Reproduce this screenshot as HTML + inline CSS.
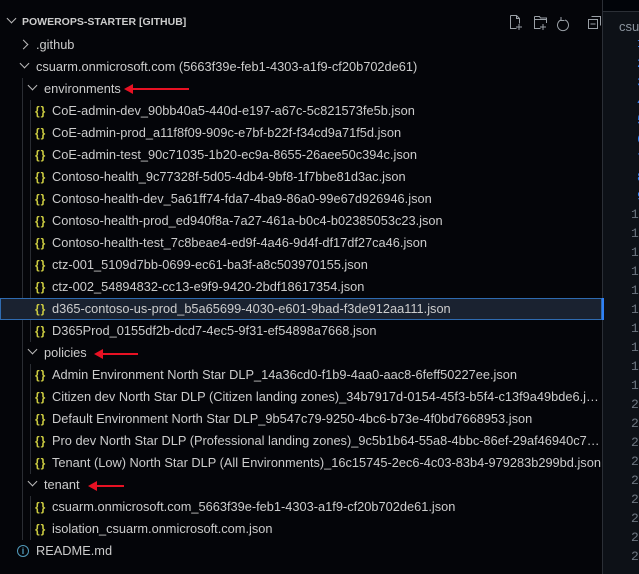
<!DOCTYPE html>
<html><head><meta charset="utf-8"><style>
*{margin:0;padding:0;box-sizing:border-box}
body{width:639px;height:574px;overflow:hidden;background:#040509;font-family:"Segoe UI","Liberation Sans",sans-serif;color:#cccccc;font-size:12.8px;position:relative}
.row{position:absolute;left:0;width:602px;height:22px;line-height:22px;white-space:nowrap;overflow:hidden}
.t{position:absolute;top:0}
.e{right:2px;overflow:hidden;text-overflow:ellipsis}
.ic{position:absolute;top:0;color:#cbcb41;font-weight:bold;font-size:12px;letter-spacing:1px}
.chev{position:absolute;top:7px;width:7px;height:7px;border-right:1.3px solid #bbb;border-bottom:1.3px solid #bbb}
.down{transform:rotate(45deg);top:4px}
.right{transform:rotate(-45deg)}
.guide{position:absolute;width:1px;background:#2a2d33}
.arrow{position:absolute;height:2px;background:#e81123}
.arrow:before{content:"";position:absolute;left:-8px;top:-4px;border-right:9px solid #e81123;border-top:5px solid transparent;border-bottom:5px solid transparent}
.editor{position:absolute;left:602px;top:0;width:37px;height:574px;background:#0d1117;border-left:1px solid #2b2f36}
.ln{position:absolute;left:28px;font-size:13px;color:#6e7681;font-family:"Liberation Mono",monospace}
</style></head><body>
<div class="row" style="top:11px;font-weight:bold;font-size:10.5px"><span class="chev down" style="left:8px"></span><span class="t" style="left:22px">POWEROPS-STARTER [GITHUB]</span></div>
<svg style="position:absolute;left:508px;top:14px" width="110" height="18" fill="none" stroke="#9aa0a6" stroke-width="1">
<path d="M2.5 1.5h6l3 3v5M2.5 1.5v13h6M8.5 1.5v3h3M11 10v6M8 13h6"/>
<path d="M26.5 2.5h5l1 1.5h6v5M26.5 2.5v12h6M26.5 5.5h12M35 10v6M32 13h6"/>
<path d="M57 5a5.5 5.5 0 1 1-4 0M53 2v3.5h3.5" transform="translate(0,1)"/>
<path d="M80.5 5.5h9v9h-9zM83.5 2.5h9v9M82.5 10h5"/>
</svg>
<div class="guide" style="left:22px;top:78px;height:462px"></div>
<div class="guide" style="left:30px;top:100px;height:242px"></div>
<div class="guide" style="left:30px;top:364px;height:110px"></div>
<div class="guide" style="left:30px;top:496px;height:44px"></div>
<div class="row" style="top:34px"><span class="chev right" style="left:20px"></span><span class="t" style="left:36px">.github</span></div>
<div class="row" style="top:56px"><span class="chev down" style="left:21px"></span><span class="t" style="left:36px">csuarm.onmicrosoft.com (5663f39e-feb1-4303-a1f9-cf20b702de61)</span></div>
<div class="row" style="top:78px"><span class="chev down" style="left:29px"></span><span class="t" style="left:44px">environments</span></div>
<div class="arrow" style="left:132px;top:88px;width:57px"></div>
<div class="row" style="top:100px"><span class="ic" style="left:35px">{}</span><span class="t" style="left:52px">CoE-admin-dev_90bb40a5-440d-e197-a67c-5c821573fe5b.json</span></div>
<div class="row" style="top:122px"><span class="ic" style="left:35px">{}</span><span class="t" style="left:52px">CoE-admin-prod_a11f8f09-909c-e7bf-b22f-f34cd9a71f5d.json</span></div>
<div class="row" style="top:144px"><span class="ic" style="left:35px">{}</span><span class="t" style="left:52px">CoE-admin-test_90c71035-1b20-ec9a-8655-26aee50c394c.json</span></div>
<div class="row" style="top:166px"><span class="ic" style="left:35px">{}</span><span class="t" style="left:52px">Contoso-health_9c77328f-5d05-4db4-9bf8-1f7bbe81d3ac.json</span></div>
<div class="row" style="top:188px"><span class="ic" style="left:35px">{}</span><span class="t" style="left:52px">Contoso-health-dev_5a61ff74-fda7-4ba9-86a0-99e67d926946.json</span></div>
<div class="row" style="top:210px"><span class="ic" style="left:35px">{}</span><span class="t" style="left:52px">Contoso-health-prod_ed940f8a-7a27-461a-b0c4-b02385053c23.json</span></div>
<div class="row" style="top:232px"><span class="ic" style="left:35px">{}</span><span class="t" style="left:52px">Contoso-health-test_7c8beae4-ed9f-4a46-9d4f-df17df27ca46.json</span></div>
<div class="row" style="top:254px"><span class="ic" style="left:35px">{}</span><span class="t" style="left:52px">ctz-001_5109d7bb-0699-ec61-ba3f-a8c503970155.json</span></div>
<div class="row" style="top:276px"><span class="ic" style="left:35px">{}</span><span class="t" style="left:52px">ctz-002_54894832-cc13-e9f9-9420-2bdf18617354.json</span></div>
<div class="row" style="top:298px;background:#1a2230;border:1px solid #2f6bb0"><span class="ic" style="left:34px;top:-1px">{}</span><span class="t" style="left:51px;top:-1px">d365-contoso-us-prod_b5a65699-4030-e601-9bad-f3de912aa111.json</span></div>
<div class="row" style="top:320px"><span class="ic" style="left:35px">{}</span><span class="t" style="left:52px">D365Prod_0155df2b-dcd7-4ec5-9f31-ef54898a7668.json</span></div>
<div class="row" style="top:342px"><span class="chev down" style="left:29px"></span><span class="t" style="left:44px">policies</span></div>
<div class="arrow" style="left:102px;top:353px;width:36px"></div>
<div class="row" style="top:364px"><span class="ic" style="left:35px">{}</span><span class="t" style="left:52px">Admin Environment North Star DLP_14a36cd0-f1b9-4aa0-aac8-6feff50227ee.json</span></div>
<div class="row" style="top:386px"><span class="ic" style="left:35px">{}</span><span class="t e" style="left:52px">Citizen dev North Star DLP (Citizen landing zones)_34b7917d-0154-45f3-b5f4-c13f9a49bde6.json</span></div>
<div class="row" style="top:408px"><span class="ic" style="left:35px">{}</span><span class="t" style="left:52px">Default Environment North Star DLP_9b547c79-9250-4bc6-b73e-4f0bd7668953.json</span></div>
<div class="row" style="top:430px"><span class="ic" style="left:35px">{}</span><span class="t e" style="left:52px">Pro dev North Star DLP (Professional landing zones)_9c5b1b64-55a8-4bbc-86ef-29af46940c7d.json</span></div>
<div class="row" style="top:452px"><span class="ic" style="left:35px">{}</span><span class="t" style="left:52px">Tenant (Low) North Star DLP (All Environments)_16c15745-2ec6-4c03-83b4-979283b299bd.json</span></div>
<div class="row" style="top:474px"><span class="chev down" style="left:29px"></span><span class="t" style="left:44px">tenant</span></div>
<div class="arrow" style="left:96px;top:485px;width:28px"></div>
<div class="row" style="top:496px"><span class="ic" style="left:35px">{}</span><span class="t" style="left:52px">csuarm.onmicrosoft.com_5663f39e-feb1-4303-a1f9-cf20b702de61.json</span></div>
<div class="row" style="top:518px"><span class="ic" style="left:35px">{}</span><span class="t" style="left:52px">isolation_csuarm.onmicrosoft.com.json</span></div>
<div class="row" style="top:540px"><span style="position:absolute;left:17px;top:5px;width:12px;height:12px;border:1.3px solid #519aba;border-radius:50%;color:#519aba;font-size:9px;line-height:10px;text-align:center;font-weight:bold">i</span><span class="t" style="left:36px">README.md</span></div>
<div class="editor">
<div style="position:absolute;left:0;top:0;width:37px;height:12px;background:#010409;border-bottom:1px solid #2b2f36"></div>
<div style="position:absolute;left:16px;top:19px;color:#8b949e;font-size:13px">csu</div>
<div class="ln" style="top:36px;left:34px;color:#2f81f7">1</div>
<div class="ln" style="top:56px;left:34px;color:#2f81f7">2</div>
<div class="ln" style="top:75px;left:34px;color:#2f81f7">3</div>
<div class="ln" style="top:94px;left:34px;color:#2f81f7">4</div>
<div class="ln" style="top:113px;left:34px;color:#2f81f7">5</div>
<div class="ln" style="top:132px;left:34px;color:#2f81f7">6</div>
<div class="ln" style="top:151px;left:34px;color:#2f81f7">7</div>
<div class="ln" style="top:170px;left:34px;color:#2f81f7">8</div>
<div class="ln" style="top:189px;left:34px;color:#2f81f7">9</div>
<div class="ln" style="top:207px">10</div><div class="ln" style="top:226px">11</div><div class="ln" style="top:245px">12</div><div class="ln" style="top:264px">13</div><div class="ln" style="top:283px">14</div><div class="ln" style="top:302px">15</div><div class="ln" style="top:321px">16</div><div class="ln" style="top:340px">17</div><div class="ln" style="top:359px">18</div><div class="ln" style="top:378px">19</div><div class="ln" style="top:397px">20</div><div class="ln" style="top:416px">21</div><div class="ln" style="top:435px">22</div><div class="ln" style="top:454px">23</div><div class="ln" style="top:473px">24</div><div class="ln" style="top:492px">25</div><div class="ln" style="top:511px">26</div><div class="ln" style="top:530px">27</div><div class="ln" style="top:549px">28</div>
<div style="position:absolute;left:-1px;top:298px;width:2px;height:22px;background:#2f81f7"></div>
</div>
</body></html>
